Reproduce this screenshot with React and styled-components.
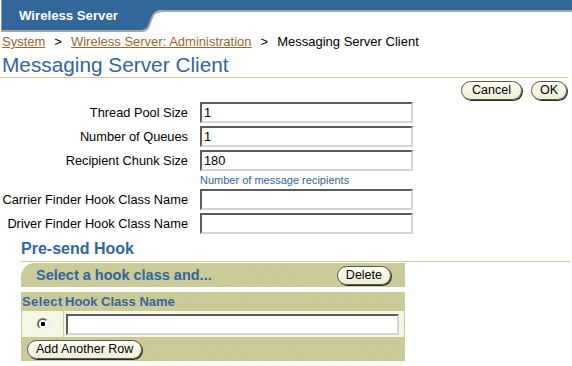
import styled, { createGlobalStyle } from "styled-components"

const Global = createGlobalStyle`
body {
  margin: 0;
  background: #fff;
  font-family: "Liberation Sans", Arial, sans-serif;
  font-size: 12px;
  color: #000;
}
`;

const BLUE = "#336699";
const OLIVE = "#CCCC99";
const HATCH = `repeating-linear-gradient(45deg, #CDCD9B 0px, #CDCD9B 2px, #C7C794 2px, #C7C794 3px)`;

const Banner = styled.div`
display: flex;
height: 32px;
`;

const Tab = styled.div`
width: 123px;
height: 30px;
margin-left: 1px;
padding-left: 17px;
background: ${BLUE};
border-left: 1px solid #8c9aa8;
border-bottom: 2px solid #a4a4a4;
color: #fff;
font-weight: bold;
font-size: 13.2px;
display: flex;
align-items: center;
`;

const Band = styled.div`
flex: 1;
height: 10px;
background: ${BLUE};
border-bottom: 2px solid #a4a4a4;
`;

const Crumbs = styled.div`
margin: 3px 0 0 2px;
line-height: 14px;
font-size: 13px;
`;

const CrumbLink = styled.a`
color: #996633;
text-decoration: underline;
`;

const Sep = styled.span`
margin: 0 9px;
`;

const Title = styled.h1`
margin: 4px 4px 0 0;
padding: 0 0 0 2px;
font-size: 20.8px;
line-height: 24px;
font-weight: normal;
color: ${BLUE};
border-bottom: 1px solid ${OLIVE};
`;

const Actions = styled.div`
display: flex;
justify-content: flex-end;
gap: 9px;
margin-top: 3px;
padding-right: 5px;
`;

const Pill = styled.button`
height: 19px;
padding: 0 ${p => p.$pad || 8}px;
border: 1px solid #5a5a4a;
border-radius: 10px;
box-shadow: 1px 1px 0 #2a2a20;
background: linear-gradient(#fffff6, #eeeed6);
font-family: "Liberation Sans", Arial, sans-serif;
font-size: 12.5px;
color: #000;
line-height: 17px;
cursor: pointer;
`;

const Form = styled.div`
display: grid;
grid-template-columns: 188px 213px;
column-gap: 12px;
row-gap: 3px;
margin-top: 2px;
`;

const Label = styled.label`
text-align: right;
align-self: center;
font-size: 12.8px;
white-space: nowrap;
`;

const Field = styled.input`
box-sizing: border-box;
width: ${p => p.$w || 213}px;
height: 21px;
margin: 0;
padding: 0 2px;
border-top: 2px solid #5c5c5c;
border-left: 2px solid #5c5c5c;
border-right: 2px solid #d4d4d4;
border-bottom: 2px solid #d4d4d4;
background: #fff;
font-family: "Liberation Sans", Arial, sans-serif;
font-size: 12.8px;
outline: none;
`;

const Hint = styled.div`
grid-column: 2;
font-size: 11px;
line-height: 12px;
color: ${BLUE};
`;

const Section = styled.div`
margin: 6px 2px 0 21px;
`;

const SectionTitle = styled.h2`
margin: 0;
padding-bottom: 3px;
font-size: 16px;
line-height: 18px;
font-weight: bold;
color: ${BLUE};
border-bottom: 1px solid ${OLIVE};
`;

const Box = styled.div`
width: 384px;
margin-top: 1px;
`;

const BoxHead = styled.div`
height: 24px;
display: flex;
align-items: center;
justify-content: space-between;
padding: 0 14px 0 15px;
background: ${HATCH};
border-top-left-radius: 14px;
color: ${BLUE};
font-weight: bold;
font-size: 14.5px;
`;

const Table = styled.div`
display: grid;
grid-template-columns: 41px 1fr;
grid-template-rows: 19px 26px 24px;
column-gap: 1px;
margin-top: 5px;
padding: 0 1px;
background: ${HATCH};
`;

const Th = styled.div`
display: flex;
align-items: center;
margin-left: ${p => p.$first ? 0 : 1}px;
letter-spacing: ${p => p.$first ? 0.4 : 0}px;
color: ${BLUE};
font-weight: bold;
font-size: 13px;
white-space: nowrap;
`;

const Td = styled.div`
display: flex;
align-items: center;
justify-content: ${p => p.$center ? "center" : "flex-start"};
padding-left: ${p => p.$center ? 0 : 2}px;
background: #f6f6e4;
`;

const Radio = styled.span`
box-sizing: border-box;
width: 12px;
height: 12px;
border-radius: 50%;
border: 2px solid;
border-color: #6a6a6a #f0f0f0 #f0f0f0 #6a6a6a;
background: radial-gradient(circle, #000 0 2px, #fff 2.5px);
`;

const Foot = styled.div`
grid-column: 1 / 3;
display: flex;
align-items: center;
padding-left: 5px;
`;

const Curve = () => (
  <svg width="22" height="32" viewBox="0 0 22 32">
    <path d="M0,0 H22 V10 C13,10 11,13 9,19 C7,26 5,30 0,30 Z" fill={BLUE} />
    <path d="M22,11 C13,11 11,14 9,20 C7,27 5,31 0,31" fill="none" stroke="#a4a4a4" strokeWidth="2" />
  </svg>
);

const rows = [
  ["Thread Pool Size", "1"],
  ["Number of Queues", "1"],
  ["Recipient Chunk Size", "180"],
];

const App = () => {
  return (
    <>
      <Global />
      <Banner>
        <Tab>Wireless Server</Tab>
        <Curve />
        <Band />
      </Banner>
      <Crumbs>
        <CrumbLink>System</CrumbLink>
        <Sep>&gt;</Sep>
        <CrumbLink>Wireless Server: Administration</CrumbLink>
        <Sep>&gt;</Sep>
        Messaging Server Client
      </Crumbs>
      <Title>Messaging Server Client</Title>
      <Actions>
        <Pill $pad={10}>Cancel</Pill>
        <Pill>OK</Pill>
      </Actions>
      <Form>
        {rows.map(([l, v]) => (
          <>
            <Label key={l}>{l}</Label>
            <Field defaultValue={v} />
          </>
        ))}
        <Hint>Number of message recipients</Hint>
        <Label>Carrier Finder Hook Class Name</Label>
        <Field />
        <Label>Driver Finder Hook Class Name</Label>
        <Field />
      </Form>
      <Section>
        <SectionTitle>Pre-send Hook</SectionTitle>
        <Box>
          <BoxHead>
            Select a hook class and...
            <Pill>Delete</Pill>
          </BoxHead>
          <Table>
            <Th $first>Select</Th>
            <Th>Hook Class Name</Th>
            <Td $center><Radio /></Td>
            <Td><Field $w={333} /></Td>
            <Foot>
              <Pill>Add Another Row</Pill>
            </Foot>
          </Table>
        </Box>
      </Section>
    </>
  )
}

export default App
